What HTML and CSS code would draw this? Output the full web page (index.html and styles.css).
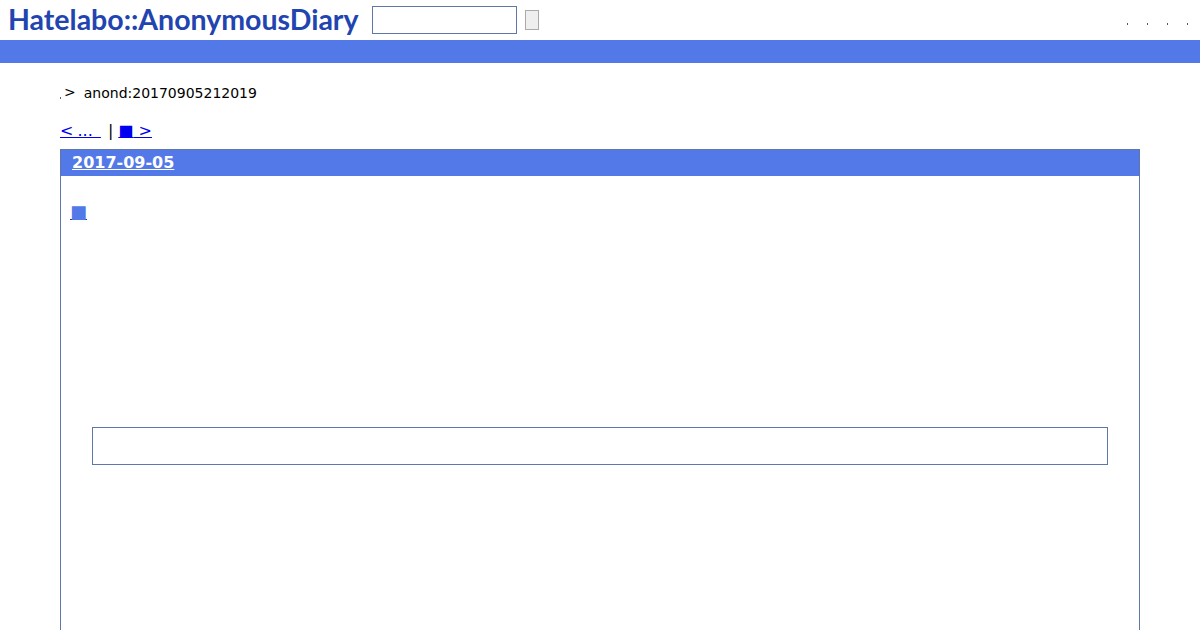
FILE: index.html
```html
<!DOCTYPE html>
<html lang="ja">
<head>
<meta charset="utf-8">
<title>anond:20170905212019</title>
<link rel="stylesheet" href="styles.css">
</head>
<body>
<header class="top">
  <a class="logo" href="#">Hatelabo::AnonymousDiary</a>
  <input class="search" type="text">
  <button class="go" type="button"></button>
  <nav class="dots"><i></i><i></i><i></i><i></i></nav>
</header>
<div class="bar"></div>
<main class="page">
  <p class="crumb"><i class="dot"></i><span class="gt">&gt;</span><span class="id">anond:20170905212019</span></p>
  <p class="pager"><a class="prev" href="#">&lt; ... &nbsp;</a><span class="sep">|</span><a href="#"><span class="sq">■</span> &gt;</a></p>
  <section class="day">
    <h2 class="day-head"><a href="#">2017-09-05</a></h2>
    <div class="day-body">
      <h3 class="entry-head"><a href="#">■</a></h3>
      <div class="ref"></div>
    </div>
  </section>
</main>
</body>
</html>
```
FILE: styles.css
```css
html, body { margin: 0; padding: 0; height: 630px; overflow: hidden; background: #fff; }
body { font-family: "DejaVu Sans", sans-serif; font-size: 14px; color: #000; }
p, h2, h3 { margin: 0; }
.top { display: flex; align-items: center; height: 40px; padding-left: 8px; box-sizing: border-box; }
.logo { font-family: "Lato", sans-serif; font-weight: 700; font-size: 28.5px; line-height: 36px; margin-top: -3px; color: #2244b0; text-decoration: none; width: 364px; white-space: nowrap; }
.search { box-sizing: border-box; width: 145px; height: 28px; margin: 0; padding: 0; border: 1px solid #5f78a8; background: #fff; }
.go { box-sizing: border-box; width: 14px; height: 20px; margin: 0 0 0 8px; padding: 0; border: 1px solid #aaa; background: #efefef; }
.dots { margin-left: auto; display: flex; gap: 19px; padding-right: 12px; padding-top: 8px; }
.dots i { width: 1px; height: 2px; background: #555; }
.bar { height: 23px; background: #5279e7; }
.page { padding: 0 60px; }
.crumb { display: flex; align-items: center; height: 20px; margin-top: 20px; }
.dot { width: 1px; height: 2px; background: #666; margin-top: 9px; margin-right: 3px; }
.gt { margin-right: 8px; margin-top: -2px; font-size: 14px; }
.pager { height: 20px; margin-top: 18px; line-height: 20px; font-size: 16px; }
.pager a { color: #00e; }
.pager .prev { word-spacing: -1px; }
.pager .sep { margin: 0 5px 0 7px; }
.day { border: 1px solid #5f78a8; border-bottom: 0; height: 500px; box-sizing: border-box; margin-top: 8px; }
.day-head { background: #5279e7; height: 26px; line-height: 26px; padding-left: 11px; font-size: 16px; font-weight: 700; }
.day-head a { color: #fff; }
.day-body { padding: 0 31px 0 9px; }
.entry-head { margin-top: 25px; height: 21px; font-size: 18px; line-height: 21px; font-weight: 400; }
.entry-head a { color: #5279e7; text-decoration-color: #1a2fa0; }
.ref { box-sizing: border-box; margin: 205px 0 0 22px; height: 38px; border: 1px solid #5f78a8; }
```
